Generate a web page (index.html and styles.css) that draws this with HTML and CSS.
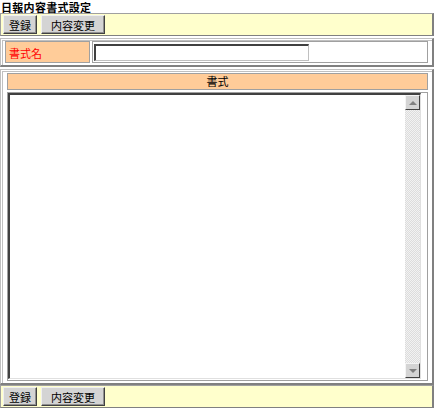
FILE: index.html
```html
<!DOCTYPE html>
<html lang="ja">
<head>
  <meta charset="UTF-8" />
  <title>日報内容書式設定</title>
  <link rel="stylesheet" href="styles.css">
</head>
<body>
  <div class="page">
    <div class="title">日報内容書式設定</div>

    <div class="toolbar">
      <button class="btn">登録</button>
      <button class="btn btn-wide">内容変更</button>
    </div>

    <div class="box form-box">
      <div class="label">書式名</div>
      <div class="field"><input type="text" class="name-input"></div>
    </div>

    <div class="box format-box">
      <div class="format-head">書式</div>
      <div class="format-body">
        <div class="memo">
          <textarea class="memo-text"></textarea>
          <div class="scrollbar">
            <div class="sb-btn"><span class="arrow up"></span></div>
            <div class="sb-track"></div>
            <div class="sb-btn"><span class="arrow down"></span></div>
          </div>
        </div>
      </div>
    </div>

    <div class="toolbar">
      <button class="btn">登録</button>
      <button class="btn btn-wide">内容変更</button>
    </div>
  </div>
</body>
</html>
```

FILE: styles.css
```css
* {
  box-sizing: border-box;
}

body {
  margin: 0;
  font-family: "Noto Sans CJK JP", "Noto Sans", sans-serif;
  font-size: 11px;
  color: #000;
  background: #fff;
}

.page {
  width: 435px;
}

.title {
  font-weight: bold;
  font-size: 11px;
  line-height: 14px;
  height: 13px;
  padding-left: 1px;
  letter-spacing: 0.3px;
}

.toolbar {
  display: flex;
  gap: 4px;
  width: 434px;
  padding: 1px 2px;
  background: #ffffcc;
  border: 1px solid #a0a0a0;
  border-right: 2px solid #808080;
  border-bottom: 1px solid #808080;
}

.btn {
  font-family: inherit;
  font-size: 11px;
  height: 19px;
  padding: 0 5px;
  background: #d4d4d4;
  color: #000;
  border: 1px solid #404040;
  border-top-color: #f0f0f0;
  border-left-color: #f0f0f0;
  box-shadow: inset -1px -1px 0 #909090;
}

.btn-wide {
  padding: 0 9px;
}

.box {
  width: 434px;
  border: 1px solid #c0c0c0;
  border-right: 2px solid #808080;
  border-bottom: 2px solid #808080;
  padding: 2px;
  margin-top: 2px;
  box-shadow: inset 1px 1px 0 #fff, inset 2px 2px 0 #c0c0c0;
}

.form-box {
  display: flex;
  gap: 2px;
  height: 29px;
  padding-left: 4px;
  padding-right: 4px;
}

.label {
  width: 85px;
  background: #ffcc99;
  border: 1px solid #a0a0a0;
  color: #ff0000;
  padding: 4px 3px;
  line-height: 14px;
}

.field {
  flex: 1;
  background: #fff;
  border: 1px solid #a0a0a0;
  padding: 2px 1px;
}

.name-input {
  display: block;
  width: 215px;
  height: 17px;
  border: 1px solid #c0c0c0;
  border-top: 2px solid #404040;
  border-left: 2px solid #404040;
  background: #fff;
}

.format-box {
  height: 316px;
  display: flex;
  flex-direction: column;
  gap: 2px;
  padding: 3px 4px 2px 6px;
}

.format-head {
  height: 17px;
  background: #ffcc99;
  border: 1px solid #a0a0a0;
  text-align: center;
  line-height: 15px;
}

.format-body {
  flex: 1;
  border: 1px solid #a0a0a0;
  padding: 0 6px 1px 0;
}

.memo {
  display: flex;
  height: 100%;
  border: 1px solid #e0e0e0;
  border-top: 2px solid #404040;
  border-left: 2px solid #404040;
  background: #fff;
}

.memo-text {
  flex: 1;
  border: none;
  resize: none;
  outline: none;
  font-family: inherit;
}

.scrollbar {
  width: 15px;
  display: flex;
  flex-direction: column;
  background-color: #e8e8e8;
  background-image: repeating-conic-gradient(#dcdcdc 0 25%, #f2f2f2 0 50%);
  background-size: 2px 2px;
}

.sb-btn {
  height: 15px;
  background: #d4d4d4;
  border: 1px solid #404040;
  border-top-color: #f4f4f4;
  border-left-color: #f4f4f4;
  display: flex;
  align-items: center;
  justify-content: center;
}

.sb-track {
  flex: 1;
}

.arrow {
  width: 0;
  height: 0;
  border-left: 4px solid transparent;
  border-right: 4px solid transparent;
}

.arrow.up {
  border-bottom: 4px solid #808080;
}

.arrow.down {
  border-top: 4px solid #808080;
}
```
